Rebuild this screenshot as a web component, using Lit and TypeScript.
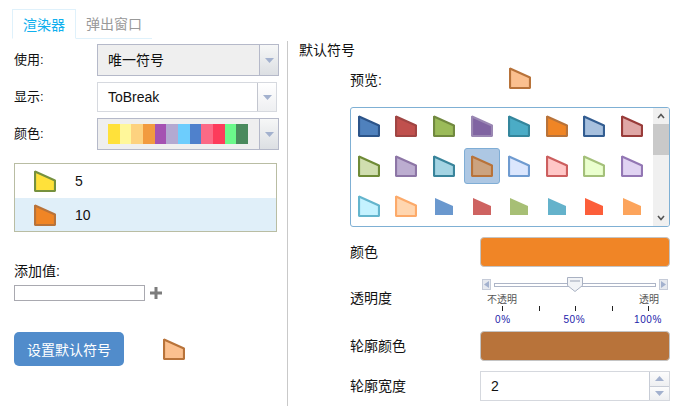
import { LitElement, html, css } from "lit";
import { customElement } from "lit/decorators.js";

const sym = (fill: string, stroke: string) => html`<svg class="sym" width="22" height="22" viewBox="0 0 22 22"><polygon points="1,1.4 21,10.4 21,21 1,21" fill=${fill} stroke=${stroke} stroke-width="2.2" stroke-linejoin="bevel"/></svg>`;
const small = (fill: string) => html`<svg class="sym" width="18" height="17" viewBox="0 0 18 17"><polygon points="0,0 18,8 18,17 0,17" fill=${fill}/></svg>`;
const arrow = () => html`<svg class="caret" width="9" height="5" viewBox="0 0 9 5"><polygon points="0,0 9,0 4.5,5" fill="#a3b1ce"/></svg>`;

const rows: [string, string][] = [
  ["#4f81bd", "#2c5489"], ["#c0504d", "#a04543"], ["#9bbb59", "#71893f"], ["#8064a2", "#9a87b3"],
  ["#4bacc6", "#34869c"], ["#f08525", "#b8733a"], ["#a7c0de", "#335d91"], ["#dfa7a6", "#993c3a"],
  ["#d0deaf", "#6f8b37"], ["#bcadd0", "#8d76a6"], ["#a4d4e3", "#39849b"], ["#cca37f", "#b8733a"],
  ["#dbe6fd", "#6f9bd0"], ["#ffc7c7", "#cc5f5f"], ["#eaffce", "#a4c07a"], ["#e0d3f2", "#9377b4"],
  ["#c4f2ff", "#64b5cd"], ["#ffd6b0", "#fcaa6a"],
];
const smalls = ["#6a98ce", "#ce6361", "#a7bf75", "#64b2cb", "#fc5e3a", "#fca45c"];
const ramp = ["#ffe13a", "#fff79a", "#fdd27f", "#f29b3f", "#a552b2", "#b3a9d1", "#6dcdfd", "#4f81cc", "#fc6a86", "#fd3c5b", "#6bf98b", "#4a8a5d"];

@customElement("app-root")
export class AppRoot extends LitElement {
  static styles = css`
    :host { display: block; width: 681px; height: 412px; background: #fff; overflow: hidden; color: #111;
      font-family: "Liberation Sans", "Noto Sans CJK SC", sans-serif; font-size: 14px; }
    * { box-sizing: border-box; }
    svg { display: block; }
    .tabs { display: flex; margin: 9px 0 0 12px; width: 140px; height: 30px; border-bottom: 1px solid #dff1fb; }
    .tab { display: flex; align-items: center; justify-content: center; color: #999; font-size: 14px; width: 76px; white-space: nowrap; padding-bottom: 1px; }
    .tab.on { width: 64px; color: #0fb0ee; border: 1px solid #dff1fb; border-bottom: 1px solid #fff; height: 30px; }
    .main { display: flex; margin-top: 2px; align-items: flex-start; }
    .left { width: 288px; height: 365px; border-right: 1px solid #c9c9c9; padding: 3px 0 0 14px; }
    .frow { display: flex; align-items: center; height: 32px; margin-bottom: 6px; }
    .frow.mid { height: 30px; }
    .frow label { width: 83px; font-size: 13px; padding-bottom: 3px; }
    .sel { width: 182px; height: 32px; display: flex; border: 1px solid #b5b9c9; background: #efefef; }
    .sel.light { width: 180px; height: 30px; border-color: #d6d9df; background: #fff; }
    .val { flex: 1; padding-left: 10px; display: flex; align-items: center; font-size: 14px; }
    .val.cjk { padding-bottom: 2px; }
    .btn { width: 19px; border-left: 1px solid #b5b9c9; background: linear-gradient(#f6f7f7, #dcdfe3); display: flex; align-items: center; justify-content: center; }
    .sel.light .btn { border-left-color: #c3c6cf; background: linear-gradient(#fff, #eeeff1); }
    .val.swatches { padding-left: 0; }
    .ramp { display: flex; width: 140px; height: 20px; margin-left: 10px; align-self: center; }
    .ramp i { flex: 1; }
    .list { width: 263px; height: 69px; border: 1px solid #b9bda3; margin-top: 13px; }
    .item { height: 34px; display: flex; align-items: center; padding-left: 19px; gap: 19px; font-size: 14px; }
    .item.on { background: #e0eff9; height: 33px; }
    .add { margin-top: 31px; font-size: 14px; line-height: 16px; }
    .addrow { display: flex; align-items: center; margin-top: 6px; gap: 5px; }
    .input { width: 131px; height: 16px; border: 1px solid #a9a9b0; background: #fff; }
    .setrow { display: flex; align-items: center; margin-top: 31px; gap: 39px; }
    .setbtn { width: 110px; height: 34px; border-radius: 5px; background: #518ccb; color: #fff; font-size: 14px; display: flex; align-items: center; justify-content: center; padding-bottom: 1px; }
    .right { flex: 1; padding: 0 0 0 11px; }
    .title { font-size: 14px; line-height: 18px; }
    .body { padding-left: 51px; }
    .preview { display: flex; align-items: center; height: 22px; margin-top: 8px; font-size: 14px; }
    .preview span { width: 159px; margin-top: 2px; }
    .gallery { margin-top: 18px; width: 320px; height: 120px; border: 1px solid #7fb0d4; border-radius: 3px; display: flex; overflow: hidden; }
    .grid { width: 302px; margin-left: -1px; display: grid; grid-template-columns: repeat(8, 37.6px); grid-auto-rows: 40px; justify-items: center; }
    .cell { width: 36px; height: 36px; display: flex; align-items: center; justify-content: center; border: 1px solid transparent; border-radius: 3px; }
    .cell.on { background: #adc7e3; border-color: #7fadd5; }
    .bar { width: 16px; margin-left: auto; background: #f0f0f0; display: flex; flex-direction: column; align-items: center; }
    .thumb { width: 16px; height: 31px; background: #c9c9c9; }
    .chev { margin: 5px 0 5px; }
    .chev.down { margin-top: auto; margin-bottom: 5px; }
    .prop { display: flex; align-items: center; font-size: 14px; }
    .prop > span { width: 130px; padding-bottom: 2px; }
    .swatch { width: 190px; height: 30px; border: 1px solid #c4c4c4; border-radius: 4px; }
    .swatch.fill { background: #f08526; }
    .swatch.outline { background: #b8733a; }
    .r1 { margin-top: 10px; }
    .r2 { height: 64px; align-items: flex-start; }
    .r2 > span { margin-top: 20px; }
    .slider { width: 190px; height: 64px; padding-top: 12px; position: relative; }
    .track { display: flex; align-items: center; padding-left: 2px; height: 11px; gap: 3px; }
    .ab { width: 9px; height: 11px; border: 1px solid #c5cbd8; background: #e6e9ef; display: flex; align-items: center; justify-content: center; flex: none; }
    .line { width: 162px; height: 4px; border: 1px solid #adb5c7; background: #fff; }
    .knob { position: absolute; left: 87px; top: 10px; }
    .ends { display: flex; justify-content: space-between; padding: 3px 11px 0 7px; font-size: 10px; color: #555; line-height: 13px; height: 16px; }
    .ticks { display: flex; justify-content: space-between; padding: 0 21px 0 22px; height: 5px; }
    .ticks i { width: 1px; background: #222; }
    .pct { display: flex; justify-content: space-between; padding: 2px 8px 0 15px; font-size: 10px; color: #2222aa; line-height: 13px; letter-spacing: 0.6px; }
    .pct b { font-weight: normal; margin-left: 4px; }
    .r4 { margin-top: 10px; }
    .spin { width: 190px; height: 30px; border: 1px solid #d5d8de; display: flex; background: #fff; }
    .spin .num { flex: 1; padding-left: 10px; display: flex; align-items: center; font-size: 14px; }
    .ups { width: 20px; border-left: 1px solid #c7ccd6; display: flex; flex-direction: column; }
    .ups div { flex: 1; display: flex; align-items: center; justify-content: center; background: linear-gradient(#fcfcfc, #eeeff1); }
    .ups div + div { border-top: 1px solid #c7ccd6; }
  `;

  render() {
    return html`
      <div class="tabs"><div class="tab on">渲染器</div><div class="tab">弹出窗口</div></div>
      <div class="main">
        <div class="left">
          <div class="frow"><label>使用:</label><div class="sel"><div class="val cjk">唯一符号</div><div class="btn">${arrow()}</div></div></div>
          <div class="frow mid"><label>显示:</label><div class="sel light"><div class="val">ToBreak</div><div class="btn">${arrow()}</div></div></div>
          <div class="frow"><label>颜色:</label><div class="sel"><div class="val swatches"><div class="ramp">${ramp.map((c) => html`<i style="background:${c}"></i>`)}</div></div><div class="btn">${arrow()}</div></div></div>
          <div class="list">
            <div class="item">${sym("#ffe13a", "#76913e")}<span>5</span></div>
            <div class="item on">${sym("#f08525", "#b8733a")}<span>10</span></div>
          </div>
          <div class="add">添加值:</div>
          <div class="addrow"><div class="input"></div>
            <svg width="12" height="12" viewBox="0 0 12 12"><path d="M4.5 0h3v4.5H12v3H7.5V12h-3V7.5H0v-3h4.5z" fill="#7c7c7c"/></svg>
          </div>
          <div class="setrow"><div class="setbtn">设置默认符号</div>${sym("#fbc08f", "#b8733a")}</div>
        </div>
        <div class="right">
          <div class="title">默认符号</div>
          <div class="body">
            <div class="preview"><span>预览:</span>${sym("#fbc08f", "#b8733a")}</div>
            <div class="gallery">
              <div class="grid">
                ${rows.map(([f, s], i) => html`<div class="cell ${i === 11 ? "on" : ""}">${sym(f, s)}</div>`)}
                ${smalls.map((c) => html`<div class="cell">${small(c)}</div>`)}
              </div>
              <div class="bar">
                <svg class="chev" width="8" height="6" viewBox="0 0 8 6"><path d="M1 5l3-3.5L7 5" fill="none" stroke="#555" stroke-width="1.6"/></svg>
                <div class="thumb"></div>
                <svg class="chev down" width="8" height="6" viewBox="0 0 8 6"><path d="M1 1l3 3.5L7 1" fill="none" stroke="#555" stroke-width="1.6"/></svg>
              </div>
            </div>
            <div class="prop r1"><span>颜色</span><div class="swatch fill"></div></div>
            <div class="prop r2"><span>透明度</span>
              <div class="slider">
                <div class="track">
                  <div class="ab"><svg width="5" height="7" viewBox="0 0 5 7"><polygon points="5,0 5,7 0,3.5" fill="#a3b1ce"/></svg></div>
                  <div class="line"></div>
                  <div class="ab"><svg width="5" height="7" viewBox="0 0 5 7"><polygon points="0,0 0,7 5,3.5" fill="#a3b1ce"/></svg></div>
                </div>
                <svg class="knob" width="16" height="15" viewBox="0 0 16 15"><path d="M.5.5h15v8L8 14.5.5 8.5z" fill="#f2f4f7" stroke="#a9b1c2"/><path d="M3 4h10" stroke="#9aa3b5"/></svg>
                <div class="ends"><span>不透明</span><span>透明</span></div>
                <div class="ticks"><i></i><i></i><i></i><i></i><i></i></div>
                <div class="pct"><span>0%</span><b>50%</b><span>100%</span></div>
              </div>
            </div>
            <div class="prop"><span>轮廓颜色</span><div class="swatch outline"></div></div>
            <div class="prop r4"><span>轮廓宽度</span>
              <div class="spin"><div class="num">2</div><div class="ups">
                <div><svg width="9" height="5" viewBox="0 0 9 5"><polygon points="0,5 9,5 4.5,0" fill="#a3b1ce"/></svg></div>
                <div>${arrow()}</div>
              </div></div>
            </div>
          </div>
        </div>
      </div>
    `;
  }
}
